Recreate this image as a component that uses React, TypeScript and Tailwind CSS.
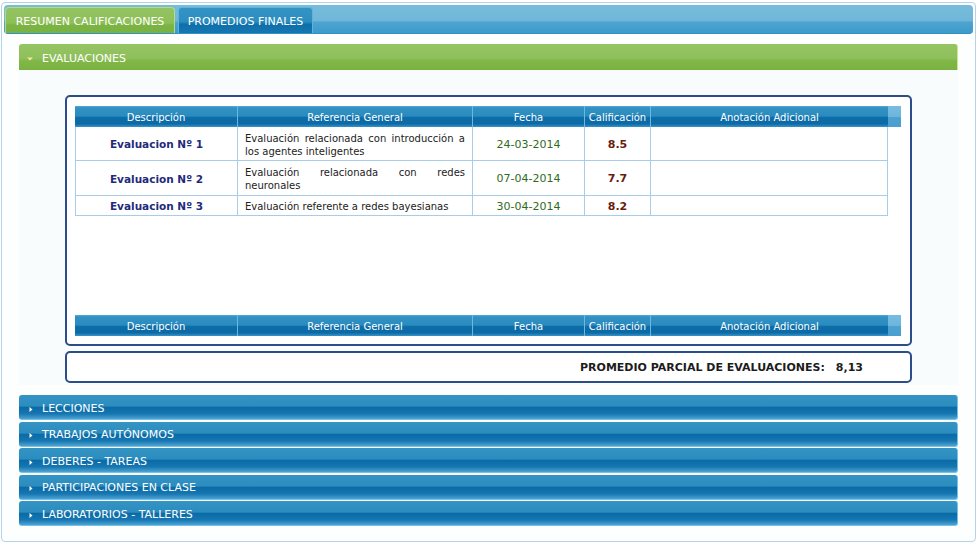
import React from "react";

const font = { fontFamily: '"DejaVu Sans", Verdana, sans-serif' };

const blueBar =
  "bg-[linear-gradient(to_bottom,#3494c4_0%,#2b8cbe_46%,#0b6ba7_52%,#1576b1_78%,#4ea3d2_100%)]";
const thBar =
  "bg-[linear-gradient(to_bottom,#5aaedb_0%,#3392c4_8%,#2a8bbe_48%,#0d6da9_55%,#0c6aa6_85%,#3a94c8_100%)]";

function RightTri() {
  return (
    <svg width="6" height="7" viewBox="0 0 6 7" className="shrink-0">
      <path d="M1.5 1 L4.5 3.5 L1.5 6 Z" fill="#ffffff" />
    </svg>
  );
}

function DownTri() {
  return (
    <svg width="8" height="6" viewBox="0 0 8 6" className="shrink-0">
      <path d="M1 1.5 L7 1.5 L4 4.5 Z" fill="#f3e7a0" />
    </svg>
  );
}

const rows = [
  {
    d: "Evaluacion Nº 1",
    r: "Evaluación relacionada con introducción a los agentes inteligentes",
    f: "24-03-2014",
    c: "8.5",
    h: "h-[34px]",
  },
  {
    d: "Evaluacion Nº 2",
    r: "Evaluación relacionada con redes neuronales",
    f: "07-04-2014",
    c: "7.7",
    h: "h-[35px]",
  },
  {
    d: "Evaluacion Nº 3",
    r: "Evaluación referente a redes bayesianas",
    f: "30-04-2014",
    c: "8.2",
    h: "h-[20px]",
  },
];

function HeaderRow() {
  return (
    <div className="flex h-[21px] w-[826px] text-[10px] text-white">
      <div className={`flex ${thBar} w-[813px]`}>
        <div className="w-[163px] flex items-center justify-center pt-[2px] border-r border-[#6cb8e0]">Descripción</div>
        <div className="w-[235px] flex items-center justify-center pt-[2px] border-r border-[#6cb8e0]">Referencia General</div>
        <div className="w-[112px] flex items-center justify-center pt-[2px] border-r border-[#6cb8e0]">Fecha</div>
        <div className="w-[66px] flex items-center justify-center pt-[2px] border-r border-[#6cb8e0]">Calificación</div>
        <div className="flex-1 flex items-center justify-center pt-[2px]">Anotación Adicional</div>
      </div>
      <div className="w-[13px] bg-[linear-gradient(to_bottom,#78bde0_0%,#6cb5dc_50%,#4aa1d0_55%,#4b9fcf_100%)]" />
    </div>
  );
}

const accItems = [
  "LECCIONES",
  "TRABAJOS AUTÓNOMOS",
  "DEBERES - TAREAS",
  "PARTICIPACIONES EN CLASE",
  "LABORATORIOS - TALLERES",
];

export default function App() {
  return (
    <div className="w-[977px] h-[542px] bg-white pt-[2px] pl-[1px]" style={font}>
      <div className="w-[975px] h-[540px] border border-[#b3d3ea] rounded-[4px] bg-[#fdfefe] p-[2px]">
        {/* tab bar */}
        <div className="h-[29px] rounded-[4px] border-b border-[#2e92c6] bg-[linear-gradient(to_bottom,#78bcdc_0%,#6fb7d9_55%,#4ea4cf_62%,#3d9acb_100%)] pl-[1px] pt-[3px] flex items-end gap-[3px]">
          <div className="h-[26px] w-[170px] pt-[4px] rounded-t-[4px] border border-b-0 border-[#b4dc84] bg-[linear-gradient(to_bottom,#95c462_0%,#8dbf58_60%,#7cb443_68%,#7ab242_100%)] text-white text-[11px] flex items-center justify-center">
            RESUMEN CALIFICACIONES
          </div>
          <div className="h-[26px] w-[135px] pt-[4px] rounded-t-[4px] border border-b-0 border-[#5cb4e0] bg-[linear-gradient(to_bottom,#3394c4_0%,#2c8dbf_55%,#0f6fab_65%,#1576b1_100%)] text-white text-[11px] flex items-center justify-center">
            PROMEDIOS FINALES
          </div>
        </div>

        <div className="px-[15px] pt-[10px]">
          {/* evaluaciones header */}
          <div className="h-[26px] pt-[4px] rounded-t-[3px] border-r border-[#c8ea8c] bg-[linear-gradient(to_bottom,#96c464_0%,#8fc05b_55%,#80b747_65%,#7ab242_100%)] flex items-center pl-[7px] gap-[8px] text-white text-[11px]">
            <DownTri />
            <span>EVALUACIONES</span>
          </div>
          {/* content panel */}
          <div className="h-[315px] bg-[#f9fcfc] px-[46px] pt-[25px]">
            <div className="h-[251px] border-2 border-[#2b4d8c] rounded-[5px] bg-white pl-[8px] pt-[9px] flex flex-col">
              <HeaderRow />
              <div className="w-[813px] text-[10px]">
                {rows.map((r, i) => (
                  <div key={i} className={`flex ${r.h} border border-t-0 border-[#a9cde8]`}>
                    <div className="w-[162px] pt-[3px] border-r border-[#a9cde8] flex items-center justify-center font-bold text-[10.5px] text-[#1f2a7c]">
                      {r.d}
                    </div>
                    <div className="w-[235px] pt-[2px] border-r border-[#a9cde8] flex items-center px-[7px] text-[#222] leading-[13px]">
                      <div className="w-full text-justify">{r.r}</div>
                    </div>
                    <div className="w-[112px] pt-[3px] border-r border-[#a9cde8] flex items-center justify-center text-[11px] text-[#2f6b1c]">
                      {r.f}
                    </div>
                    <div className="w-[66px] pt-[3px] border-r border-[#a9cde8] flex items-center justify-center font-bold text-[11px] text-[#6a1b0c]">
                      {r.c}
                    </div>
                    <div className="flex-1" />
                  </div>
                ))}
              </div>
              <div className="flex-1" />
              <div className="mb-[8px]">
                <HeaderRow />
              </div>
            </div>
            <div className="mt-[5px] h-[32px] pt-[3px] border-2 border-[#2b4d8c] rounded-[5px] bg-white flex items-center justify-end pr-[47px] text-[11px] font-bold text-[#1c1c1c]">
              <span>PROMEDIO PARCIAL DE EVALUACIONES:</span>
              <span className="ml-[11px]">8,13</span>
            </div>
          </div>

          {/* accordion items */}
          <div className="mt-[10px] flex flex-col gap-[1.5px]">
            {accItems.map((t) => (
              <div
                key={t}
                className={`h-[25px] pt-[4px] rounded-[3px] border-r border-b border-[#74c2ea] ${blueBar} flex items-center pl-[9px] gap-[8px] text-white text-[11px]`}
              >
                <RightTri />
                <span>{t}</span>
              </div>
            ))}
          </div>
        </div>
      </div>
    </div>
  );
}
